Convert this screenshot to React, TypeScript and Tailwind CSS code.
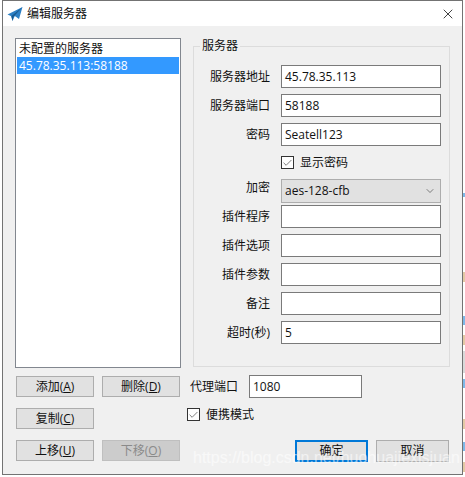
import React from 'react';
import { Check, ChevronDown, X } from 'lucide-react';

const fieldBox = 'w-[160px] h-[23px] bg-white border border-[#7a7a7a] px-[3px] text-[12px] leading-[21px] text-[#111]';

function Field({ label, value, className = '' }: { label: string; value?: string; className?: string }) {
  return (
    <div className={`flex items-center ${className}`}>
      <div className="w-[70px] pr-[5px] text-right text-[12px] text-[#111]">{label}</div>
      <div className="w-[6px]" />
      <div className={fieldBox}>{value}</div>
    </div>
  );
}

function Btn({ children, className = '', disabled = false }: { children: React.ReactNode; className?: string; disabled?: boolean }) {
  return (
    <div
      className={`w-[78px] h-[21px] flex items-center justify-center text-[12px] border ${
        disabled ? 'bg-[#cccccc] border-[#bfbfbf] text-[#8a8a8a]' : 'bg-[#e1e1e1] border-[#adadad] text-[#111]'
      } ${className}`}
    >
      {children}
    </div>
  );
}

function CheckBox() {
  return (
    <div className="w-[13px] h-[13px] border border-[#333] bg-white flex items-center justify-center">
      <Check className="w-[12px] h-[12px] text-[#444]" strokeWidth={1.5} />
    </div>
  );
}

export default function App() {
  return (
    <div className="relative w-[465px] h-[477px] bg-white overflow-hidden font-['Open_Sans','Noto_Sans_CJK_SC',sans-serif]">
      <div className="ml-[2px] w-[461px] h-[475px] border border-[#737373] bg-[#f0f0f0] flex flex-col">
        {/* title bar */}
        <div className="h-[25px] bg-white flex items-center shrink-0">
          <svg viewBox="0 0 16 16" className="w-[16px] h-[16px] ml-[4px]">
            <path d="M0.5 8.5 15.5 1 12 13 7.8 10 5.5 15 4.3 10.3Z" fill="#2b7fc4" />
            <path d="M15.5 1 4.3 10.3 5.5 15 6.3 11Z" fill="#17598f" />
          </svg>
          <span className="ml-[4px] text-[12px] text-[#111]">编辑服务器</span>
          <X className="ml-auto mr-[6px] w-[16px] h-[16px] text-[#111]" strokeWidth={1.2} />
        </div>

        <div className="flex flex-1 pl-[12px] pt-[12px]">
          {/* left column */}
          <div className="w-[166px] shrink-0">
            <div className="h-[330px] bg-white border border-[#82878f] p-[1px] text-[12px] leading-[17px]">
              <div className="h-[17px] pl-[2px] text-[#111]">未配置的服务器</div>
              <div className="h-[17px] pl-[2px] bg-[#3399ff] text-white">45.78.35.113:58188</div>
            </div>
            <div className="flex gap-[8px] mt-[8px] ml-[1px]">
              <Btn>
                添加(<u>A</u>)
              </Btn>
              <Btn>
                删除(<u>D</u>)
              </Btn>
            </div>
            <div className="mt-[11px] ml-[1px]">
              <Btn>
                复制(<u>C</u>)
              </Btn>
            </div>
            <div className="flex gap-[8px] mt-[11px] ml-[1px]">
              <Btn>
                上移(<u>U</u>)
              </Btn>
              <Btn disabled>
                下移(<u>O</u>)
              </Btn>
            </div>
          </div>

          {/* right column */}
          <div className="ml-[12px] w-[257px] shrink-0">
            <div className="relative mt-[8px] h-[321px] border border-[#dcdcdc] pl-[11px] pt-[18px]">
              <span className="absolute left-[6px] -top-[9px] bg-[#f0f0f0] px-[2px] text-[12px] leading-[16px] text-[#111]">服务器</span>
              <Field label="服务器地址" value="45.78.35.113" />
              <Field label="服务器端口" value="58188" className="mt-[6px]" />
              <Field label="密码" value="Seatell123" className="mt-[6px]" />
              <div className="flex items-center mt-[10px] ml-[76px] h-[13px]">
                <CheckBox />
                <span className="ml-[6px] text-[12px] text-[#111]">显示密码</span>
              </div>
              <div className="flex items-center mt-[10px]">
                <div className="w-[70px] pr-[5px] text-right text-[12px] text-[#111] -mt-[6px]">加密</div>
                <div className="w-[6px]" />
                <div className="w-[160px] h-[24px] bg-[#e1e1e1] border border-[#adadad] flex items-center pl-[3px] pr-[4px] text-[12px] text-[#111]">
                  aes-128-cfb
                  <ChevronDown className="ml-auto w-[12px] h-[12px] text-[#444]" strokeWidth={1.3} />
                </div>
              </div>
              <Field label="插件程序" className="mt-[2px]" />
              <Field label="插件选项" className="mt-[6px]" />
              <Field label="插件参数" className="mt-[6px]" />
              <Field label="备注" className="mt-[6px]" />
              <Field label="超时(秒)" value="5" className="mt-[6px]" />
            </div>

            <div className="flex items-center -ml-[3px] mt-[8px]">
              <span className="text-[12px] text-[#111] w-[59px]">代理端口</span>
              <div className="w-[113px] h-[23px] bg-white border border-[#7a7a7a] px-[3px] text-[12px] leading-[21px] text-[#111]">1080</div>
            </div>
            <div className="flex items-center -ml-[6px] mt-[10px] h-[13px]">
              <CheckBox />
              <span className="ml-[6px] text-[12px] text-[#111]">便携模式</span>
            </div>
            <div className="flex gap-[8px] ml-[102px] mt-[19px]">
              <div className="w-[73px] h-[22px] bg-[#e1e1e1] border-2 border-[#0078d7] flex items-center justify-center text-[12px] text-[#111]">确定</div>
              <div className="w-[73px] h-[22px] bg-[#e1e1e1] border border-[#adadad] flex items-center justify-center text-[12px] text-[#111]">取消</div>
            </div>
          </div>
        </div>
      </div>

      {/* bits of the page behind, showing past the dialog's right edge */}
      <div className="absolute left-[463px] top-[193px] w-[2px] h-[4px] bg-[#7db8e8]" />
      <div className="absolute left-[463px] top-[272px] w-[2px] h-[10px] bg-[#e3c9a5]" />
      <div className="absolute left-[463px] top-[316px] w-[2px] h-[9px] bg-[#7db8e8]" />
      <div className="absolute left-[463px] top-[335px] w-[2px] h-[10px] bg-[#e3c9a5]" />
      <div className="absolute left-[463px] top-[351px] w-[2px] h-[22px] bg-[#d9d9d9]" />
      <div className="absolute left-[463px] top-[379px] w-[2px] h-[9px] bg-[#7db8e8]" />
      <div className="absolute left-[463px] top-[419px] w-[2px] h-[10px] bg-[#e3c9a5]" />
      <div className="absolute left-[463px] top-[442px] w-[2px] h-[9px] bg-[#7db8e8]" />
      <div className="absolute left-[463px] top-[462px] w-[2px] h-[10px] bg-[#e3c9a5]" />

      {/* CSDN watermark over the dialog */}
      <span className="absolute left-[193px] top-[446px] text-[16px] leading-[24px] whitespace-nowrap text-white/55 font-['Liberation_Sans',sans-serif]">
        https://blog.csdn.net/huohuajiexisjuan
      </span>
    </div>
  );
}
